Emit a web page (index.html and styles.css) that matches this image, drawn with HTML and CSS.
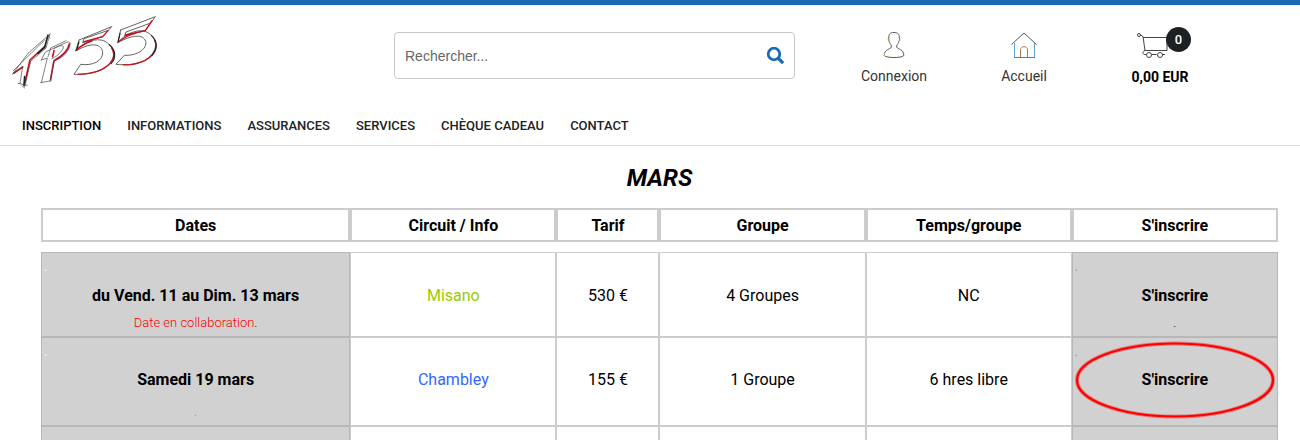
FILE: index.html
```html
<!DOCTYPE html>
<html lang="fr">
<head>
<meta charset="utf-8">
<title>TP55 - Inscription</title>
<meta name="viewport" content="width=device-width, initial-scale=1">
<link rel="stylesheet" href="styles.css">
</head>
<body>
<header class="site-header">
  <div class="top">
    <a class="logo" href="#" aria-label="TP55">
      <svg viewBox="30 42 450 231" width="150" height="77" fill="none" stroke-linejoin="round" stroke-linecap="round">
        <g transform="translate(24 90)">
          <path d="M18 129l26-18M110 50L66 90 50 160M184 42c-4 24-24 38-46 50l-10 56M138 62l-4 18" stroke="#c4101c" stroke-width="5"/>
          <path d="M120 16l-10 36-20 18M50 140l-2 26" stroke="#222" stroke-width="5"/>
          <path d="M14 132L60 70 126 12M16 122l94-92M14 132l30-22-8 50M126 12l-12 42-46 40-18 76M30 160l28 6M42 168l8 6M118 14l8 10M100 90l12-24 66-30c14-2 8 16 0 28-8 14-24 24-40 28l-12 62M100 90l18-6-18 74M98 158l32-6M138 56c20-12 38-14 22 8-8 10-18 18-28 22M120 80l8-26 46-22" stroke="#444" stroke-width="2"/>
        </g>
        <g transform="translate(210 36)">
          <path d="M27 84L125 44 98 74 38 92 42 80 112 56M27 84L17 117C46 84 92 72 116 96C142 122 134 150 96 172C72 184 40 188 12 187L32 157C66 162 98 148 98 122C96 96 66 88 17 117" stroke="#444" stroke-width="2.500"/>
          <path d="M152 54L256 14 226 56 164 72 168 60 240 34M152 54L143 92C172 60 216 44 242 68C268 92 258 124 224 146C198 158 166 160 138 157L163 130C194 132 228 116 228 92C224 68 194 64 143 92" stroke="#444" stroke-width="2.500"/>
          <path d="M114 56L98 74 42 89M20 114C34 100 50 92 66 87M125 108C142 136 120 160 96 172C72 184 50 186 24 187M246 26L226 56 166 69M146 89C164 76 178 68 196 64M254 84C266 112 250 132 224 146C202 156 178 160 160 158" stroke="#c4101c" stroke-width="4"/>
          <path d="M20 114L27 90M118 98C136 112 140 136 124 154M145 88L150 64M244 70C264 88 262 112 246 130" stroke="#222" stroke-width="3.500"/>
        </g>
      </svg>
    </a>
    <form class="search">
      <input class="search-input" type="text" placeholder="Rechercher..." aria-label="Rechercher">
      <button class="search-button" type="button" aria-label="Lancer la recherche">
        <svg viewBox="0 0 18 18" width="18" height="18" fill="none" stroke="#1c6ab2"><circle cx="8" cy="7" r="5.800" stroke-width="2.800"/><path d="M12.500 11.500l4.600 4.600" stroke-width="3.200"/></svg>
      </button>
    </form>
    <a class="action account" href="#">
      <svg viewBox="0 0 28 28" width="28" height="28" fill="none" stroke="#555"><path d="M14 1.500c-4 0-5.500 2-5.200 5.500-.8.600-.5 2.500.5 3.200.4 2 1 3 2 4v2c-1 2.500-7 1.500-7 8.300 2 2.700 17.500 2.700 19.500 0 0-6.800-6-5.800-7-8.300v-2c1-1 1.600-2 2-4 1-.7 1.300-2.600.5-3.200.3-3.500-1.300-5.500-5.300-5.500z"/><path d="M9 7v4M4.500 22v3" stroke="#d99a55"/></svg>
      <span>Connexion</span>
    </a>
    <a class="action home" href="#">
      <svg viewBox="0 0 28 28" width="28" height="28" fill="none"><path d="M4.500 12v14.500M24.500 12v14.500" stroke="#5aa5dc"/><path d="M4 26.500h21" stroke="#777"/><path d="M1.500 13.500L14 2l12.500 11.500" stroke="#555"/><path d="M10.500 26v-7c0-4.500 7-4.500 7 0v7" stroke="#a67c52"/></svg>
      <span>Accueil</span>
    </a>
    <a class="action cart" href="#">
      <span class="cart-icon">
        <svg viewBox="0 0 32 28" width="32" height="28" fill="none" stroke="#444"><circle cx="3" cy="4" r="1.500"/><path d="M4.500 4l2.500 1.500 2 14M7 6.500h24M31 6v13.500M8.500 19.500H31M9 19.500c-3 1-2.500 4 0 4h1.500M15.500 23.500h5M26 23.500h3"/><circle cx="13" cy="24" r="2.500"/><circle cx="24" cy="24" r="2.500"/></svg>
        <span class="badge">0</span>
      </span>
      <strong>0,00 EUR</strong>
    </a>
  </div>
  <nav class="menu">
    <a class="current" href="#">INSCRIPTION</a>
    <a href="#">INFORMATIONS</a>
    <a href="#">ASSURANCES</a>
    <a href="#">SERVICES</a>
    <a href="#">CHÈQUE CADEAU</a>
    <a href="#">CONTACT</a>
  </nav>
</header>
<main class="content">
  <h1 class="month">MARS</h1>
  <table class="calendar">
    <colgroup><col class="w3"><col class="w2"><col class="w1"><col class="w2"><col class="w2"><col class="w2"></colgroup>
    <thead>
      <tr><th>Dates</th><th>Circuit / Info</th><th>Tarif</th><th>Groupe</th><th>Temps/groupe</th><th>S'inscrire</th></tr>
    </thead>
    <tbody>
      <tr>
        <td class="shade"><p class="lead light">.</p><p class="value">du Vend. 11 au Dim. 13 mars</p><p class="note"><span class="alert">Date en collaboration</span>.</p></td>
        <td><p class="value"><a class="misano" href="#">Misano</a></p></td>
        <td><p class="value">530 €</p></td>
        <td><p class="value">4 Groupes</p></td>
        <td><p class="value">NC</p></td>
        <td class="shade"><p class="lead">.</p><p class="value"><a href="#">S'inscrire</a></p><p class="note">.</p></td>
      </tr>
      <tr class="tall">
        <td class="shade"><p class="lead light">.</p><p class="value">Samedi 19 mars</p><p class="note faint">.</p></td>
        <td><p class="value"><a class="chambley" href="#">Chambley</a></p></td>
        <td><p class="value">155 €</p></td>
        <td><p class="value">1 Groupe</p></td>
        <td><p class="value">6 hres libre</p></td>
        <td class="shade circled"><p class="lead">.</p><p class="value"><a href="#">S'inscrire</a></p><p class="note pale">.</p>
          <svg class="ring" viewBox="0 0 200 78" fill="none"><ellipse cx="100" cy="39" rx="98" ry="36.500" stroke="#f00" stroke-opacity=".4" stroke-width="4"/><ellipse cx="100" cy="39" rx="98" ry="36.500" stroke="#f00" stroke-width="2.200"/></svg>
        </td>
      </tr>
      <tr class="next">
        <td class="shade"></td><td></td><td></td><td></td><td></td><td class="shade"></td>
      </tr>
    </tbody>
  </table>
</main>
</body>
</html>
```
FILE: styles.css
```css
* { box-sizing: border-box; }
body {
  margin: 0;
  background: #fff;
  color: #000;
  font-family: Roboto, "Liberation Sans", sans-serif;
  font-size: 16px;
}
a { color: inherit; text-decoration: none; }
p { margin: 0; }
svg { display: block; }

.site-header { border-top: 5px solid #1c6ab2; border-bottom: 1px solid #ddd; }
.top {
  display: grid;
  grid-template-columns: 394fr 401fr 34fr 130fr 130fr 142fr 69fr;
  align-items: start;
}
.logo { padding: 9px 0 0 10px; }
.search {
  display: flex;
  align-items: center;
  height: 47px;
  margin-top: 27px;
  padding: 0 10px;
  border: 1px solid #c8c8c8;
  border-radius: 4px;
}
.search-input {
  flex: 1;
  min-width: 0;
  padding: 0;
  border: 0;
  outline: 0;
  background: none;
  font: 14px "Liberation Sans", sans-serif;
}
.search-input::placeholder { color: #666; opacity: 1; }
.search-button { padding: 0; border: 0; background: none; }
.action {
  display: flex;
  flex-direction: column;
  align-items: center;
  gap: 3px;
  padding-top: 26px;
  color: #333;
  font-size: 14px;
  line-height: 28px;
}
.account { grid-column: 4; }
.cart { gap: 4px; }
.cart strong { color: #000; font-weight: 700; }
.cart-icon { position: relative; padding-right: 16px; }
.badge {
  position: absolute;
  top: -4px;
  left: 30px;
  width: 25px;
  height: 25px;
  border-radius: 50%;
  background: #1d2124;
  color: #fff;
  font-size: 13px;
  font-weight: 500;
  line-height: 25px;
  text-align: center;
}
.menu {
  display: flex;
  gap: 26px;
  padding: 25px 22px 9px;
  color: #222;
  font-size: 13px;
  font-weight: 500;
  line-height: 20px;
}
.menu .current { color: #000; }

.content { padding: 16px 22px 0 41px; }
.month {
  margin: 0 0 14px;
  font-size: 24px;
  font-style: italic;
  font-weight: 700;
  line-height: 32px;
  text-align: center;
}
.calendar {
  width: 100%;
  table-layout: fixed;
  border-collapse: separate;
  border-spacing: 0;
}
.w3 { width: 25%; }
.w2 { width: 16.666%; }
.w1 { width: 8.333%; }
.calendar th {
  height: 34px;
  padding: 1px 0 0;
  border: 2px solid #ccc;
  font-weight: 700;
  line-height: 24px;
}
.calendar tbody::before { content: ""; display: block; height: 10px; }
.calendar td {
  height: 85px;
  padding: 0;
  border: 1px solid #ccc;
  text-align: center;
  vertical-align: top;
}
.calendar td > .value:first-child { padding-top: 31px; }
.calendar .tall td { height: 89px; }
.calendar .tall td > .value:first-child { padding-top: 30px; }
.calendar .next td { height: 14px; border-bottom: 0; }
.calendar .shade { border-color: #b7b7b7; background: #d1d1d1; }
.lead {
  height: 23px;
  padding-left: 2px;
  color: #999;
  font-size: 12px;
  line-height: 28px;
  text-align: left;
}
.light { color: #fff; }
.value { line-height: 24px; }
.lead + .value { padding-top: 8px; font-weight: 700; }
.tall .lead { height: 22px; }
.note { padding-top: 5px; font-size: 13px; font-weight: 300; line-height: 20px; }
.tall .note { padding-top: 10px; }
.alert { color: #f00; }
.faint { color: #888; }
.pale { color: #eee; }
.misano { color: #99cc00; }
.chambley { color: #3366ff; }
.circled { position: relative; }
.ring {
  position: absolute;
  top: 3px;
  left: 2px;
  width: 200px;
  height: 78px;
  pointer-events: none;
}
```
